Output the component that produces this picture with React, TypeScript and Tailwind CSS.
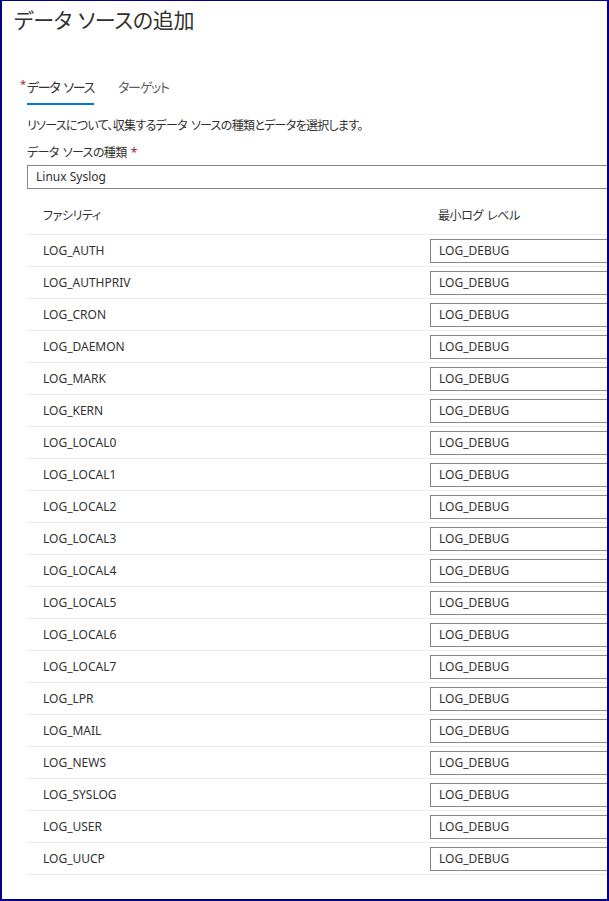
import { Fragment } from "react";

const facilities = [
  "LOG_AUTH",
  "LOG_AUTHPRIV",
  "LOG_CRON",
  "LOG_DAEMON",
  "LOG_MARK",
  "LOG_KERN",
  "LOG_LOCAL0",
  "LOG_LOCAL1",
  "LOG_LOCAL2",
  "LOG_LOCAL3",
  "LOG_LOCAL4",
  "LOG_LOCAL5",
  "LOG_LOCAL6",
  "LOG_LOCAL7",
  "LOG_LPR",
  "LOG_MAIL",
  "LOG_NEWS",
  "LOG_SYSLOG",
  "LOG_USER",
  "LOG_UUCP",
];

// japanese text with wider word gaps, like the portal font
const Jp = ({ text, gap }: { text: string; gap: string }) => {
  const parts = text.split(" ");
  return (
    <>
      {parts.map((p, i) => (
        <Fragment key={i}>
          {i > 0 && <span className={gap}> </span>}
          {p}
        </Fragment>
      ))}
    </>
  );
};

const App = () => {
  return (
    <div className="w-[609px] h-[901px] bg-white border-t border-x-2 border-b-2 border-[#00008b] overflow-hidden text-[#323130] font-['Noto_Sans','Noto_Sans_CJK_JP',sans-serif] [font-feature-settings:'palt']">
      <div className="w-[760px]">
        <h1 className="mt-[4px] pl-[12px] text-[21px] leading-[28px] font-normal tracking-[-0.3px] font-['Noto_Sans_CJK_JP',sans-serif]">
          <Jp text="データ ソースの追加" gap="inline-block w-[6px]" />
        </h1>

        <div className="mt-[44px] pl-[25px] flex gap-[24px] text-[13px] leading-[20px] tracking-[-1.3px]">
          <div className="relative">
            <span className="absolute -left-[7px] -top-[3px] text-[11px] text-[#a4262c]">*</span>
            <span><Jp text="データ ソース" gap="inline-block w-[4px]" /></span>
            <div className="mt-[6px] h-[2px] bg-[#0078d4]"></div>
          </div>
          <div className="text-[#605e5c]">ターゲット</div>
        </div>

        <div className="pl-[25px]">
          <p className="mt-[13px] text-[12px] leading-[16px] tracking-[-0.7px]">
            <Jp text="リソースについて、収集するデータ ソースの種類とデータを選択します。" gap="inline-block w-[4px]" />
          </p>
          <p className="mt-[11px] text-[12px] leading-[16px] tracking-[-0.6px]">
            <Jp text="データ ソースの種類" gap="inline-block w-[4px]" />
            <span className="inline-block w-[4px]"> </span>
            <span className="text-[#a4262c]">*</span>
          </p>
          <div className="mt-[4px] h-[24px] border border-[#8a8886] flex items-center pl-[8px] text-[12px]">
            Linux Syslog
          </div>

          <div className="h-[46px] pt-[8px] flex items-center border-b border-[#edebe9] text-[12px]">
            <div className="w-[403px] pl-[16px] tracking-[-0.4px]">ファシリティ</div>
            <div className="pl-[8px] tracking-[-0.4px]">
              <Jp text="最小ログ レベル" gap="inline-block w-[4px]" />
            </div>
          </div>

          {facilities.map((f) => (
            <div key={f} className="h-[32px] flex items-center border-b border-[#edebe9] text-[12px]">
              <div className="w-[403px] pl-[16px] pt-px">{f}</div>
              <div className="flex-1 h-[24px] border border-[#8a8886] flex items-center pl-[8px] pt-px">
                LOG_DEBUG
              </div>
            </div>
          ))}
        </div>
      </div>
    </div>
  );
};

export default App;
